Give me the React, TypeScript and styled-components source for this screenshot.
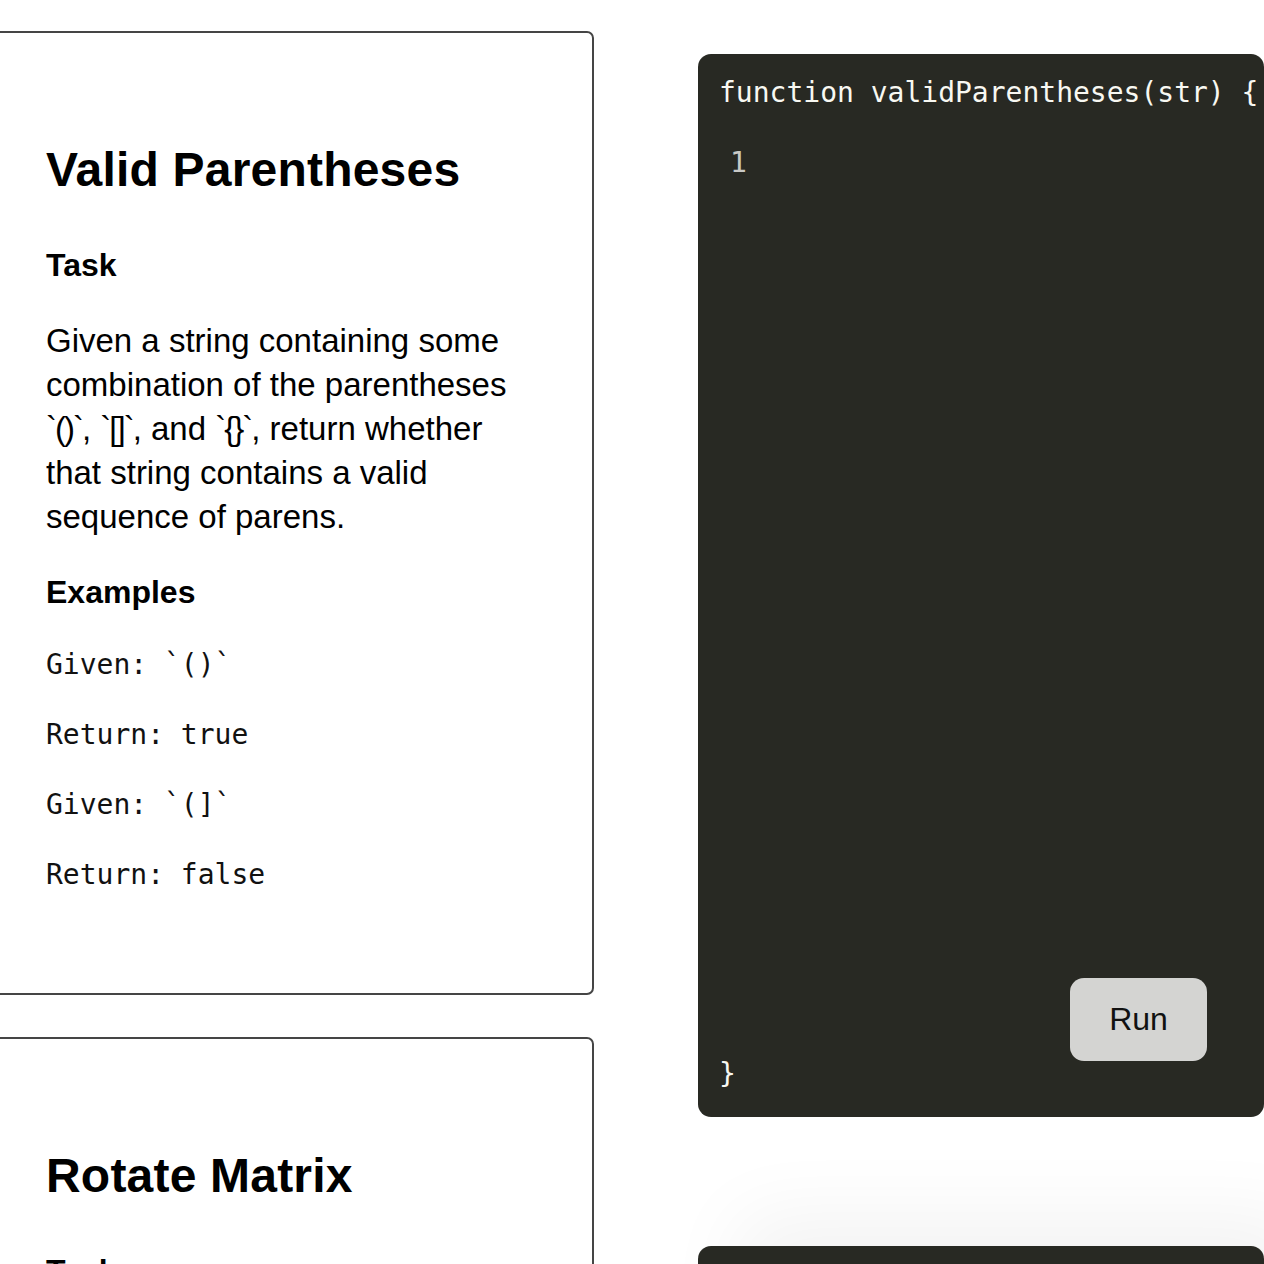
import React from "react";
import styled, { createGlobalStyle } from "styled-components";

const GlobalStyle = createGlobalStyle`
  html, body {
    margin: 0;
    padding: 0;
    background: #ffffff;
    overflow: hidden;
  }
  body {
    font-family: "Liberation Sans", Arial, Helvetica, sans-serif;
    color: #000;
  }
`;

const Page = styled.div`
  display: flex;
  align-items: flex-start;
  gap: 104px;
  margin-left: -20px;
  padding-top: 31px;
`;

const ProblemColumn = styled.div`
  display: flex;
  flex-direction: column;
  gap: 42px;
  width: 614px;
  flex-shrink: 0;
`;

const EditorColumn = styled.div`
  display: flex;
  flex-direction: column;
  gap: 129px;
  width: 566px;
  flex-shrink: 0;
  padding-top: 23px;
`;

const Card = styled.section`
  box-sizing: border-box;
  border: 2px solid #454545;
  border-radius: 7px;
  padding: 109px 72px 98px 64px;
  background: #fff;
`;

const Title = styled.h1`
  margin: 0;
  font-size: 48px;
  line-height: 56px;
  font-weight: 700;
  letter-spacing: 0.2px;
`;

const SectionHeading = styled.h3<{ $gap: number }>`
  margin: ${(p) => p.$gap}px 0 0;
  font-size: 32px;
  line-height: 40px;
  font-weight: 700;
`;

const Description = styled.p`
  margin: 34px 0 0;
  font-size: 33px;
  line-height: 44px;
  font-weight: 400;
`;

const Tick = styled.span`
  letter-spacing: -2px;
`;

const Examples = styled.div`
  display: flex;
  flex-direction: column;
  gap: 30px;
  margin-top: 33px;
`;

const ExampleLine = styled.code`
  display: block;
  font-family: "DejaVu Sans Mono", "Liberation Mono", monospace;
  font-size: 28px;
  line-height: 40px;
  color: #111;
  white-space: pre;
`;

const Editor = styled.div<{ $lifted?: boolean }>`
  box-sizing: border-box;
  height: 1063px;
  display: flex;
  flex-direction: column;
  background: #282923;
  border-radius: 13px;
  padding: 22px 57px 27px 21px;
  font-family: "DejaVu Sans Mono", "Liberation Mono", monospace;
  font-size: 28px;
  line-height: 33px;
  color: #f8f8f2;
  box-shadow: ${(p) =>
    p.$lifted ? "40px -30px 80px rgba(0, 0, 0, 0.05)" : "none"};
`;

const CodeLine = styled.div`
  white-space: pre;
`;

const CodeBody = styled.div`
  flex: 1;
  display: flex;
  flex-direction: column;
  padding: 37px 0 0 11px;
`;

const LineNumber = styled.span`
  color: #c9c9c6;
`;

const RunRow = styled.div`
  display: flex;
  justify-content: flex-end;
  margin-bottom: -4px;
`;

const RunButton = styled.button`
  width: 137px;
  height: 83px;
  border: none;
  border-radius: 14px;
  background: #d4d4d2;
  color: #111;
  font-family: "Liberation Sans", Arial, sans-serif;
  font-size: 32px;
  cursor: pointer;
`;

type Problem = {
  title: string;
  fn: string;
  description: React.ReactNode;
  examples: string[];
};

const problems: Problem[] = [
  {
    title: "Valid Parentheses",
    fn: "function validParentheses(str) {",
    description: (
      <>
        Given a string containing some combination of the parentheses{" "}
        <Tick>`()`</Tick>, <Tick>`[]`</Tick>, and <Tick>`{"{}"}`</Tick>, return
        whether that string contains a valid sequence of parens.
      </>
    ),
    examples: ["Given: `()`", "Return: true", "Given: `(]`", "Return: false"],
  },
  {
    title: "Rotate Matrix",
    fn: "function rotateMatrix(matrix) {",
    description:
      "Given an N x N matrix, rotate it 90 degrees clockwise in place and return the rotated matrix.",
    examples: ["Given: [[1,2],[3,4]]", "Return: [[3,1],[4,2]]"],
  },
];

export default function App() {
  return (
    <>
      <GlobalStyle />
      <Page>
        <ProblemColumn>
          {problems.map((p) => (
            <Card key={p.title}>
              <Title>{p.title}</Title>
              <SectionHeading $gap={47}>Task</SectionHeading>
              <Description>{p.description}</Description>
              <SectionHeading $gap={33}>Examples</SectionHeading>
              <Examples>
                {p.examples.map((e, i) => (
                  <ExampleLine key={i}>{e}</ExampleLine>
                ))}
              </Examples>
            </Card>
          ))}
        </ProblemColumn>
        <EditorColumn>
          {problems.map((p, i) => (
            <Editor key={p.title} $lifted={i === 1}>
              <CodeLine>{p.fn}</CodeLine>
              <CodeBody>
                <LineNumber>1</LineNumber>
              </CodeBody>
              <RunRow>
                <RunButton type="button">Run</RunButton>
              </RunRow>
              <CodeLine>{"}"}</CodeLine>
            </Editor>
          ))}
        </EditorColumn>
      </Page>
    </>
  );
}
